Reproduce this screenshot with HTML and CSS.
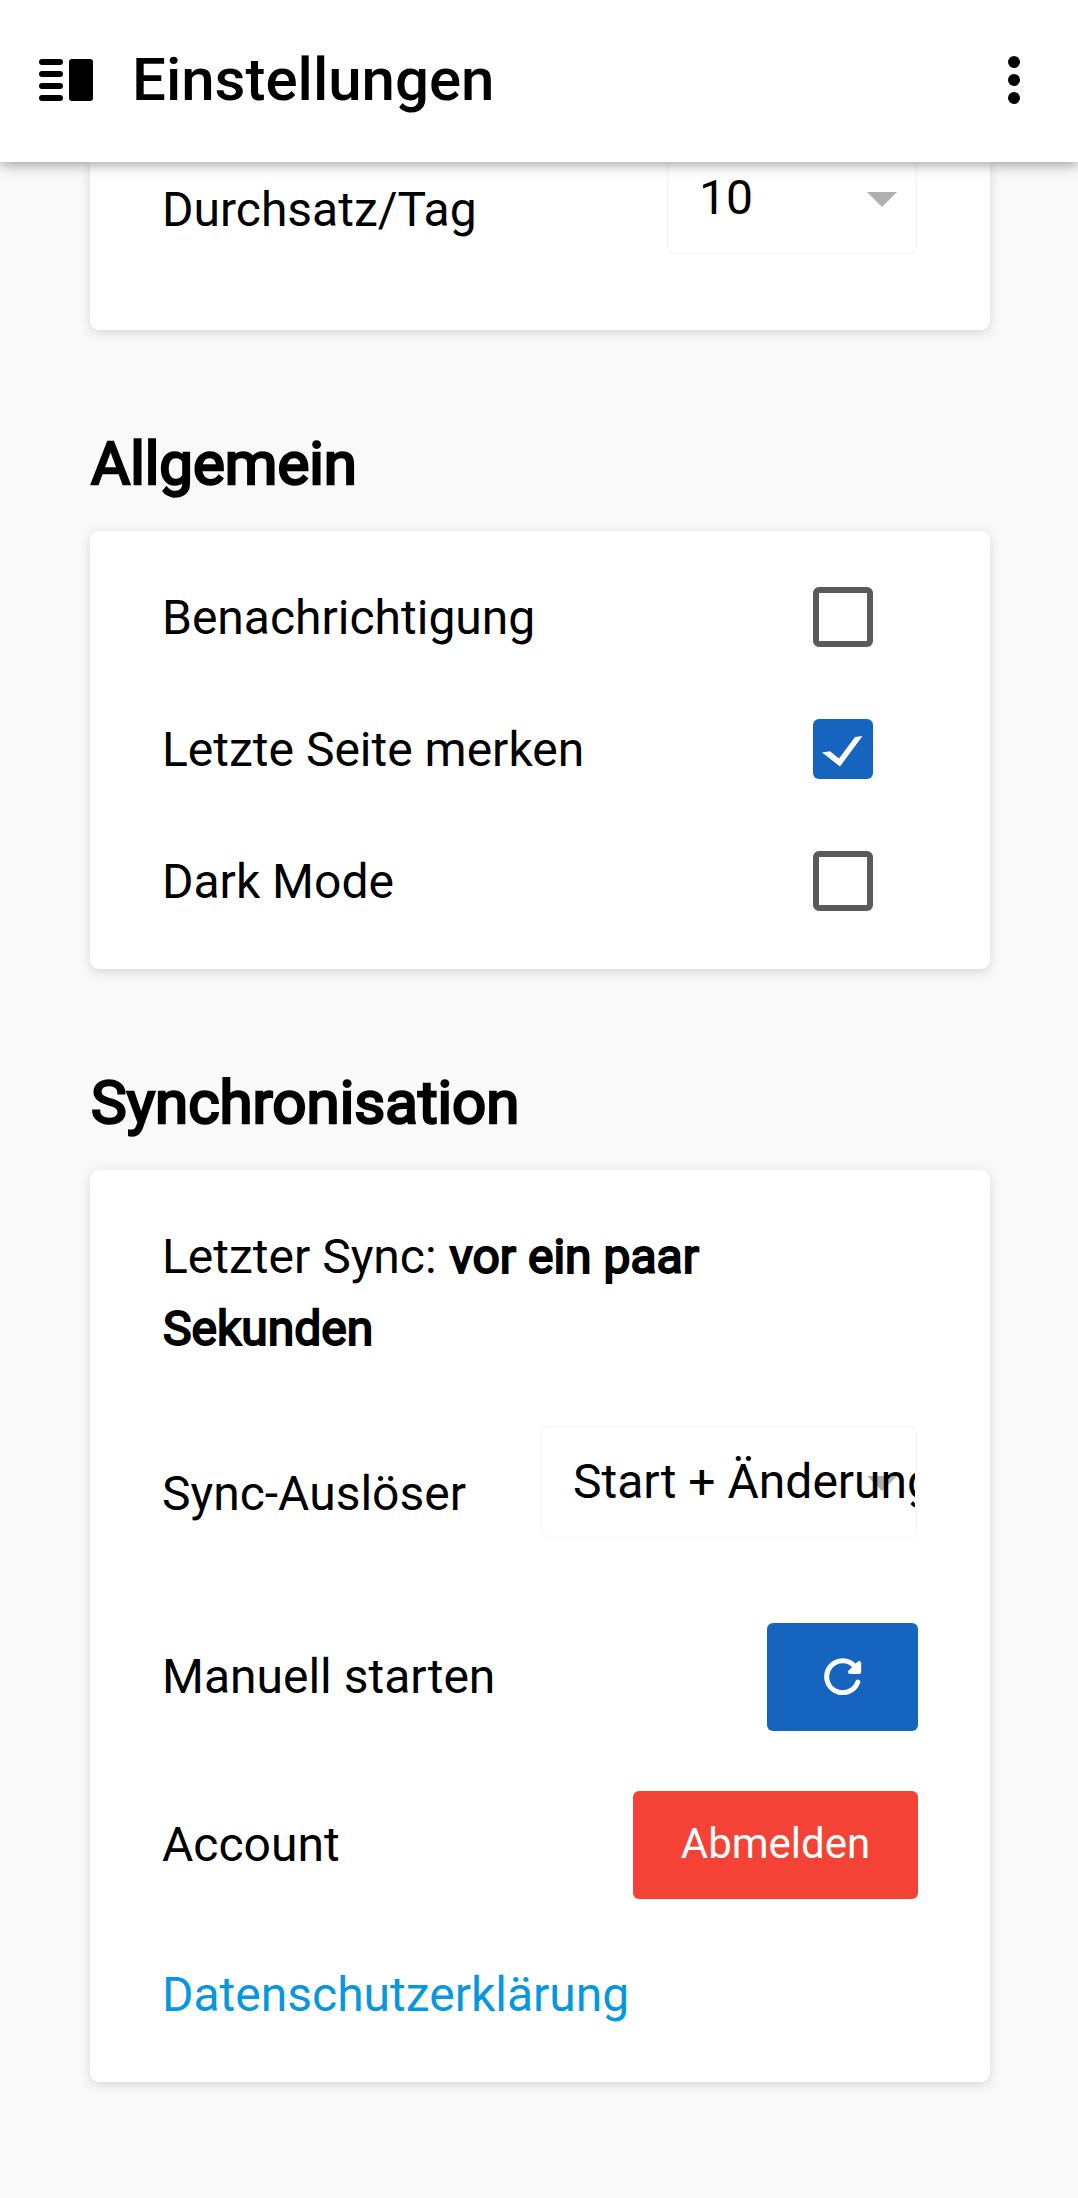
FILE: index.html
```html
<!DOCTYPE html>
<html lang="de">
<head>
<meta charset="utf-8">
<title>Einstellungen</title>
<link rel="stylesheet" href="styles.css">
</head>
<body>
<header class="toolbar">
  <svg class="menu-icon" viewBox="0 0 54 42" width="54" height="42">
    <rect x="0" y="0" width="24" height="6" rx="3"/><rect x="0" y="12" width="24" height="6" rx="3"/>
    <rect x="0" y="24" width="24" height="6" rx="3"/><rect x="0" y="36" width="24" height="6" rx="3"/>
    <rect x="30" y="0" width="24" height="42" rx="3"/>
  </svg>
  <h1 class="toolbar-title">Einstellungen</h1>
  <svg class="more-icon" viewBox="0 0 12 48" width="12" height="48"><circle cx="6" cy="6" r="6"/><circle cx="6" cy="24" r="6"/><circle cx="6" cy="42" r="6"/></svg>
</header>
<main class="content">
  <section class="card card-learning">
    <div class="row">
      <span class="label">Durchsatz/Tag</span>
      <div class="select select-small"><span class="select-text">10</span></div>
    </div>
  </section>

  <h2 class="section-title">Allgemein</h2>
  <section class="card card-general">
    <div class="row check-row"><span class="label">Benachrichtigung</span><span class="checkbox"></span></div>
    <div class="row check-row"><span class="label">Letzte Seite merken</span><span class="checkbox checked"><svg viewBox="0 0 60 60" width="60" height="60"><path d="M9 33.5L17 32.3L26 39.5L42 18L49.5 17L27 47.5Z"/></svg></span></div>
    <div class="row check-row"><span class="label">Dark Mode</span><span class="checkbox"></span></div>
  </section>

  <h2 class="section-title">Synchronisation</h2>
  <section class="card card-sync">
    <p class="last-sync">Letzter Sync: <b class="strong">vor ein paar Sekunden</b></p>
    <div class="row sync-row">
      <span class="label">Sync-Auslöser</span>
      <div class="select select-wide"><span class="select-text">Start + Änderungen</span></div>
    </div>
    <div class="row button-row">
      <span class="label">Manuell starten</span>
      <button class="button primary" aria-label="Synchronisieren">
        <svg viewBox="0 0 38 38" width="38" height="38"><path class="arc" d="M31 9.5A16 16 0 1 0 33.8 25"/><path class="head" d="M35.2 6V15H26Z"/></svg>
      </button>
    </div>
    <div class="row button-row account-row">
      <span class="label">Account</span>
      <button class="button danger">Abmelden</button>
    </div>
    <a class="link">Datenschutzerklärung</a>
  </section>
</main>
</body>
</html>
```

FILE: styles.css
```css
* { box-sizing: border-box; }
body {
  margin: 0;
  height: 2198px;
  overflow: hidden;
  background: #f9f9f9;
  color: #000;
  font: 400 48px/72px Roboto, sans-serif;
}
.toolbar {
  position: relative;
  z-index: 1;
  display: flex;
  align-items: center;
  height: 162px;
  padding: 0 58px 2px 39px;
  background: #fff;
  box-shadow: 0 3px 12px rgba(0, 0, 0, .36);
}
.toolbar-title {
  flex: 1;
  margin: 0 0 0 39px;
  font-size: 60px;
  font-weight: 500;
  line-height: 72px;
}
.content { padding: 0 88px 0 90px; }
.card {
  padding: 0 72px;
  border-radius: 9px;
  background: #fff;
  box-shadow: 0 3px 12px rgba(0, 0, 0, .14);
}
.card-learning { height: 168px; border-radius: 0 0 9px 9px; }
.card-general { height: 438px; padding-top: 21px; }
.card-sync { height: 912px; padding-top: 51px; }
.section-title {
  height: 201px;
  margin: 0;
  padding: 98px 0 0 1px;
  font-size: 60px;
  font-weight: 400;
  -webkit-text-stroke: 2.5px #000;
}
.row { display: flex; justify-content: space-between; }
.card-learning .label { padding-top: 12px; }
.card-learning .select { margin-top: -21px; }
.check-row { height: 132px; align-items: center; padding-right: 45px; }
.checkbox {
  width: 60px;
  height: 60px;
  margin-bottom: 2px;
  border: 6px solid #5a5a5a;
  border-radius: 6px;
}
.checked { border: 0; background: #1565c0; }
.checked svg { display: block; fill: #fff; }
.last-sync { width: 600px; margin: 0; }
.strong {
  padding-left: 1px;
  -webkit-box-decoration-break: clone;
  box-decoration-break: clone;
  font-weight: 400;
  -webkit-text-stroke: 2px #000;
}
.select {
  position: relative;
  height: 114px;
  padding: 18px 0 0 30px;
  overflow: hidden;
  border: 3px solid #fafafa;
  border-radius: 9px;
  white-space: nowrap;
}
.select::after {
  content: "";
  position: absolute;
  right: 18px;
  top: 48px;
  border: 15px solid transparent;
  border-top-color: #b0b0b0;
  border-bottom: 0;
}
.select-text { position: relative; z-index: 1; }
.select-small { width: 252px; }
.select-wide { width: 378px; }
.sync-row { height: 114px; margin-top: 60px; }
.sync-row .label { padding-top: 33px; }
.button-row { height: 108px; margin-top: 84px; align-items: center; }
.account-row { margin-top: 60px; }
.button {
  display: flex;
  align-items: center;
  justify-content: center;
  height: 108px;
  padding: 0 0 2px;
  border: 0;
  border-radius: 6px;
  color: #fff;
  font: 400 42px/72px Roboto, sans-serif;
}
.primary { width: 151px; background: #1565c0; }
.danger { width: 285px; background: #f44336; }
.arc { fill: none; stroke: #fff; stroke-width: 5; stroke-linecap: round; }
.head { fill: #fff; stroke: #fff; stroke-width: 4; stroke-linejoin: round; }
.link { display: block; margin-top: 60px; color: #0797df; }
```
